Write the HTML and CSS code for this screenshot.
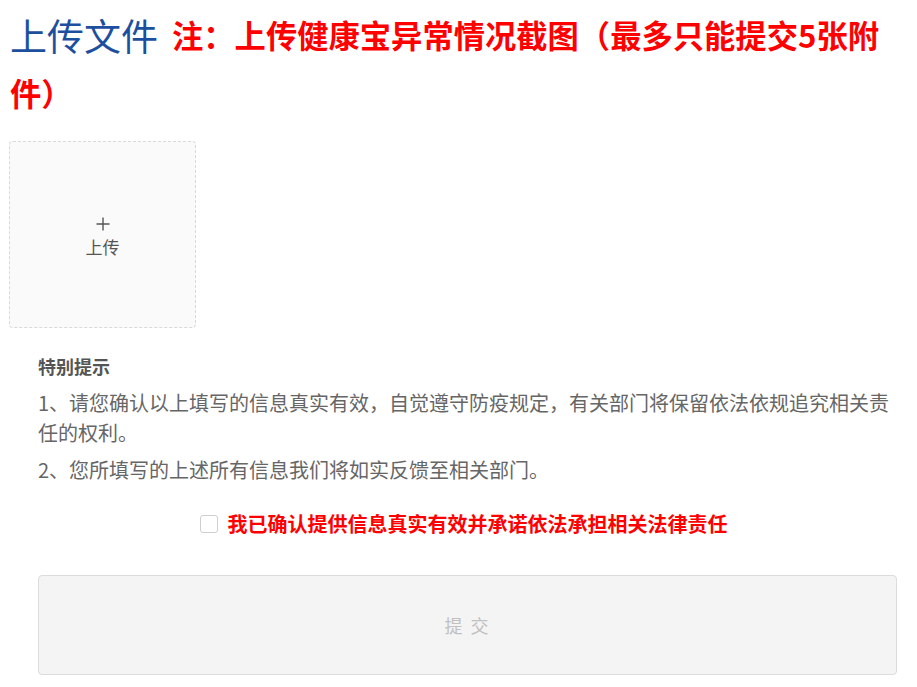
FILE: index.html
```html
<!DOCTYPE html>
<html lang="zh-CN">
<head>
  <meta charset="UTF-8">
  <title>上传文件</title>
  <link rel="stylesheet" href="styles.css">
</head>
<body>

<div class="page">
  <h2 class="upload-title">上传文件<span class="upload-note">注：上传健康宝异常情况截图（最多只能提交5张附件）</span></h2>

  <div class="uploader">
    <svg class="plus" width="14" height="14" viewBox="0 0 14 14">
      <path d="M7 0.5V13.5M0.5 7H13.5" stroke="#555" stroke-width="1.4" fill="none"/>
    </svg>
    <div class="uploader-text">上传</div>
  </div>

  <div class="notice">
    <div class="tips">
      <div class="tips-title">特别提示</div>
      <p class="first">1、请您确认以上填写的信息真实有效，自觉遵守防疫规定，有关部门将保留依法依规追究相关责任的权利。</p>
      <p>2、您所填写的上述所有信息我们将如实反馈至相关部门。</p>
    </div>

    <label class="agree">
      <span class="agree-box"></span>
      <span class="agree-text">我已确认提供信息真实有效并承诺依法承担相关法律责任</span>
    </label>

    <button class="submit-btn" disabled>提 交</button>
  </div>
</div>

</body>
</html>
```

FILE: styles.css
```css
body {
  margin: 0;
  font-family: "Noto Sans CJK SC", "Noto Sans", sans-serif;
  background: #fff;
  color: #666;
}
.page {
  padding: 6px 10px 10px 10px;
}
.upload-title {
  margin: 0;
  font-size: 37px;
  font-weight: normal;
  line-height: 58px;
  color: #1d4f9f;
}
.upload-note {
  margin-left: 14px;
  font-size: 31.3px;
  font-weight: bold;
  line-height: 58px;
  vertical-align: top;
  color: #ff0000;
}
.uploader {
  box-sizing: border-box;
  margin-top: 19px;
  margin-left: -1px;
  width: 187px;
  height: 187px;
  padding-top: 6px;
  border: 1px dashed #d9d9d9;
  border-radius: 4px;
  background: #fafafa;
  display: flex;
  flex-direction: column;
  align-items: center;
  justify-content: center;
  gap: 5px;
  color: #555;
}
.plus {
  display: block;
}
.uploader-text {
  font-size: 17px;
  line-height: 22px;
}
.notice {
  margin: 0 10px 0 28px;
}
.tips {
  margin-top: 23px;
}
.tips-title {
  font-size: 18px;
  font-weight: bold;
  color: #555;
  line-height: 30px;
}
.tips p {
  margin: 7px 0 0 0;
  font-size: 20px;
  line-height: 30px;
  color: #666;
}
.agree {
  display: flex;
  align-items: center;
  justify-content: center;
  gap: 10px;
  margin-top: 24px;
  padding-right: 8px;
  cursor: pointer;
}
.agree-box {
  width: 16px;
  height: 16px;
  border: 1px solid #d0d0d0;
  border-radius: 3px;
  background: #fff;
}
.agree-text {
  font-size: 20px;
  font-weight: bold;
  color: #ff0000;
  line-height: 30px;
}
.submit-btn {
  display: block;
  margin-top: 36px;
  width: 100%;
  height: 100px;
  background: #f4f4f4;
  border: 1px solid #dcdcdc;
  border-radius: 4px;
  font-family: inherit;
  font-size: 18px;
  letter-spacing: 2px;
  color: #c0c0c0;
}
```
